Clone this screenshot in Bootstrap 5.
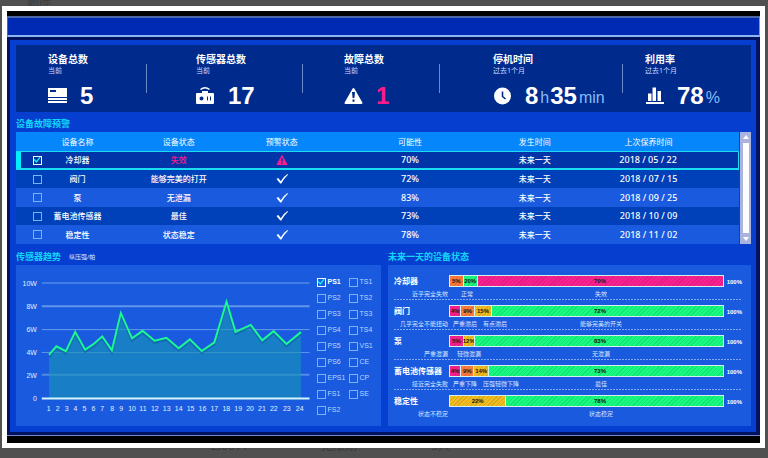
<!DOCTYPE html>
<html lang="zh-CN">
<head>
<meta charset="utf-8">
<meta name="viewport" content="width=device-width, initial-scale=1">
<title>设备监控</title>
<link href="https://cdn.jsdelivr.net/npm/bootstrap@5.3.0/dist/css/bootstrap.min.css" rel="stylesheet">
<style>
body{background:#505050;font-family:"Noto Sans","Noto Sans CJK SC",sans-serif;font-size:8px;line-height:12px;color:#fff;min-height:100vh;overflow:hidden}
.backdrop-text{position:absolute;left:0;right:0;color:#3a3a3a;font-size:12px;line-height:14px;white-space:nowrap}
.backdrop-top{top:-6px;padding-left:27px}
.backdrop-bottom{top:439px;padding-left:211px}
.backdrop-bottom span{display:inline-block;width:110px}
.frame{position:relative;margin:6px 3px 10px 2px;border:5px solid #fff;background:#000;padding:5px 0 7px}
.top-strip{height:21px;background:#0029b4;border:solid;border-width:2px 1px;border-color:#4c68a8 #6b9af0 #8ab8ee #3d62c8}
.board{border:3px solid #001260;border-right-width:4px;background:#063fd0;padding:5px 5px 6px 6px}
.board-end{height:1px;background:#7088c8}
.stats{display:grid;grid-template-columns:130fr 156fr 137fr 183fr 129fr;background:#002a8c;height:67px}
.stat{position:relative;padding:8px 0 0 50px}
.stat:first-child{padding-left:32px}
.stat:nth-child(3){padding-left:42px}
.stat:nth-child(4){padding-left:54px}
.stat:last-child{padding-left:23px}
.stat+.stat::before{content:"";position:absolute;left:0;top:19px;height:29px;border-left:1px solid #6a8ac8}
.stat h2{font-size:10px;line-height:12px;font-weight:700;margin:0}
.stat p{font-size:7px;line-height:12px;margin:0;color:#c9dcff}
.stat .figure-line{height:26px;margin-top:6px;white-space:nowrap}
.stat svg{width:20px;height:20px;margin-right:12px;flex:none}
.stat strong{font:700 24px/24px "Liberation Sans",sans-serif}
.stat .unit{font:16px/24px "Liberation Sans",sans-serif;color:#86bdf8;margin:3px 1px 0 2px}
.hot{color:#f91c8a}
.section-name{font-size:9px;height:20px;line-height:24px;font-weight:700;color:#12d6f8;margin:0}
.section-note{font-size:6px;line-height:24px;color:#dbe8ff}
.alerts{table-layout:fixed;width:100%;margin:0;text-align:center;border-collapse:separate;border-spacing:0}
.alerts th{height:19px;padding:0;background:#0586fb;font-weight:400;font-size:8px}
.alerts td{height:19px;padding:0;background:#0040b8;line-height:12px;font-weight:500}
.alerts tr:nth-child(even) td{height:18px}
.alerts tr:nth-child(odd) td{background:#195adf}
.alerts tr.chosen td{background:#0034a8;border:solid #1cdcf0;border-width:1px 0 2px}
.alerts tr.chosen td:last-child{border-right-width:1px}
.alerts tr.chosen td:first-child{box-shadow:inset 5px 0 #00f0ff}
.alerts td:first-child{padding-left:6px}
.alerts svg{width:12px;height:12px;display:block;margin:auto}
.num{font-size:9px}
.c1{width:5%}.c2{width:7%}.c3{width:21%}.c4{width:7.5%}.c5{width:28%}.c6{width:6.5%}.c7{width:25%}
.tick{appearance:none;width:9px;height:9px;margin:0;border:1px solid #78b4f4;background:transparent;display:block;flex:none}
.alerts .tick{margin:auto}
.tick:checked{border-color:#eefcff}
.tick:checked::after{content:"";display:block;width:7px;height:7px;background:#14f0e0;clip-path:polygon(0 45%,16% 34%,40% 62%,86% 4%,100% 16%,42% 92%)}
.scroller{width:11px;background:#aab2e0;margin-left:1px;padding:3px 2px}
.scroller i{border:3px solid transparent;border-top:0;border-bottom:4px solid #fff}
.scroller i:last-child{transform:rotate(180deg)}
.scroller b{width:6px;background:#fff;flex:1;margin:4px 0}
.panels{display:grid;grid-template-columns:minmax(0,365fr) minmax(0,363fr);column-gap:7px;margin-top:1px}
.panel{background:#195adf;height:161px}
.plot{flex:300 1 0;min-width:0}
.plot text{font:7px "Liberation Sans",sans-serif;fill:#e4f0ff}
.sensors{flex:65 1 0;display:grid;grid-template-columns:32px 30px;grid-template-rows:repeat(9,16px);grid-auto-flow:column;padding:9px 0 0 3px}
.sensors label{display:flex;align-items:center;gap:2px;font:7px/16px "Liberation Sans",sans-serif;color:#b8d8ff;white-space:nowrap}
.sensors label.picked{color:#fff;font-weight:700}
.states{padding:5px 9px 0 6px}
.state{display:grid;grid-template-columns:55px minmax(0,1fr) 18px;grid-template-rows:18px 12px;height:30px}
.state:not(:last-child){background:repeating-linear-gradient(90deg,#7fa8f0 0 2px,transparent 2px 3px) bottom/100% 1px no-repeat}
.state h3{font-size:8px;line-height:12px;font-weight:700;margin:5px 0 0;white-space:nowrap}
.state .total{font:700 6px/12px "Liberation Sans",sans-serif;margin-top:6px;text-align:right}
.meter{height:12px;margin-top:5px;border:1px solid #d5f2ee;border-radius:0;overflow:visible;background:none}
.seg{flex:none;font:700 6px/10px "Liberation Sans",sans-serif;color:#14200c;white-space:nowrap;border-left:1px solid #d5f2ee;background-image:repeating-linear-gradient(135deg,rgba(0,0,0,.1) 0 1px,transparent 1px 3px)}
.seg:first-child{border-left:0}
.seg span{display:flex;justify-content:center;margin:0 -4px}
.rest{flex:1 1 0;min-width:0;display:flex;justify-content:flex-end}
.rest span{flex:none;width:246px;margin:0}
.pink{background-color:#f92090}.orange{background-color:#ff7a3c}.gold{background-color:#f0bc20}.green{background-color:#18fa80}
.note{font-size:6px;line-height:12px;color:#dbe8ff;white-space:nowrap}
.note-first{text-align:right;padding-right:1px}
.notes{display:grid}
.notes>*{grid-area:1/1}
.notes .main-note{justify-self:end;width:246px;text-align:center}
.notes .side{display:flex;gap:6px;padding-left:4px}
</style>
</head>
<body>
<div class="backdrop-text backdrop-top">删除</div>
<div class="backdrop-text backdrop-bottom"><span>2.00TT</span><span>无限期</span><span>3天</span></div>
<div class="frame">
<header class="top-strip"></header>
<main class="board">
<section class="stats">
<div class="stat"><h2>设备总数</h2><p>当前</p><div class="figure-line d-flex align-items-center">
<svg viewBox="0 0 20 20" fill="#fff"><path fill-rule="evenodd" d="M0 2h19v9H0zM2 4v2h6V4z"/><path d="M0 12h19v2H0zM0 15h19v2H0z"/></svg><strong>5</strong></div></div>
<div class="stat"><h2>传感器总数</h2><p>当前</p><div class="figure-line d-flex align-items-center">
<svg viewBox="0 0 20 20"><path d="M4.500 3.500Q9 0 13.500 3.500" fill="none" stroke="#fff" stroke-width="1.500"/><path fill="#fff" fill-rule="evenodd" d="M1 7h5V5h6v2h5q1 0 1 1v9q0 1-1 1H1q-1 0-1-1V8q0-1 1-1zM7.500 12.500a2 2 0 1 0-4 0a2 2 0 1 0 4 0M11 10.500v4h1v-4zM14 10.500v4h1v-4z"/></svg><strong>17</strong></div></div>
<div class="stat"><h2>故障总数</h2><p>当前</p><div class="figure-line d-flex align-items-center">
<svg viewBox="0 0 20 20"><path d="M9.500 3L17.500 17H1.500z" fill="#fff" stroke="#fff" stroke-width="2" stroke-linejoin="round"/><path d="M8 6h3l-.6 6H8.600zM8.500 13.500h2v2.200h-2z" fill="#002a8c"/></svg><strong class="hot">1</strong></div></div>
<div class="stat"><h2>停机时间</h2><p>过去1个月</p><div class="figure-line d-flex align-items-center">
<svg viewBox="0 0 20 20"><circle cx="9.500" cy="10" r="8.500" fill="#fff"/><path d="M9.500 5.500v5l3 2.500" fill="none" stroke="#002a8c" stroke-width="1.600"/></svg><strong>8</strong><span class="unit">h</span><strong>35</strong><span class="unit">min</span></div></div>
<div class="stat"><h2>利用率</h2><p>过去1个月</p><div class="figure-line d-flex align-items-center">
<svg viewBox="0 0 20 20" fill="#fff"><path d="M1 16h18v2H1zM3 7.500h3.500V15H3zM7.500 1.500H11V15H7.500zM12.500 5H16v10h-3.500z"/></svg><strong>78</strong><span class="unit">%</span></div></div>
</section>
<h2 class="section-name">设备故障预警</h2>
<section class="d-flex">
<table class="alerts">
<colgroup><col class="c1"><col class="c2"><col class="c3"><col class="c4"><col class="c5"><col class="c6"><col class="c7"></colgroup>
<thead><tr><th></th><th>设备名称</th><th>设备状态</th><th>预警状态</th><th>可能性</th><th>发生时间</th><th>上次保养时间</th></tr></thead>
<tbody>
<tr class="chosen"><td><input class="tick" type="checkbox" checked aria-label="冷却器"></td><td>冷却器</td><td class="hot">失效</td><td><svg viewBox="0 0 12 12"><path d="M6 1.500L11 10.500H1z" fill="#f91c8a" stroke="#f91c8a" stroke-linejoin="round"/><path d="M5.300 4h1.400v3.500H5.300zM5.300 8.500h1.400v1.300H5.300z" fill="#0034a8"/></svg></td><td class="num">70%</td><td>未来一天</td><td class="num">2018 / 05 / 22</td></tr>
<tr><td><input class="tick" type="checkbox" aria-label="阀门"></td><td>阀门</td><td>能够完美的打开</td><td><svg viewBox="0 0 12 12"><path d="M.5 6L2.300 5 4.800 8.200Q7.500 3.500 11.500 1L12 1.800Q8.500 5 5.300 10.500H4.300Q2.500 8.500.5 6z" fill="#fff"/></svg></td><td class="num">72%</td><td>未来一天</td><td class="num">2018 / 07 / 15</td></tr>
<tr><td><input class="tick" type="checkbox" aria-label="泵"></td><td>泵</td><td>无泄漏</td><td><svg viewBox="0 0 12 12"><path d="M.5 6L2.300 5 4.800 8.200Q7.500 3.500 11.500 1L12 1.800Q8.500 5 5.300 10.500H4.300Q2.500 8.500.5 6z" fill="#fff"/></svg></td><td class="num">83%</td><td>未来一天</td><td class="num">2018 / 09 / 25</td></tr>
<tr><td><input class="tick" type="checkbox" aria-label="蓄电池传感器"></td><td>蓄电池传感器</td><td>最佳</td><td><svg viewBox="0 0 12 12"><path d="M.5 6L2.300 5 4.800 8.200Q7.500 3.500 11.500 1L12 1.800Q8.500 5 5.300 10.500H4.300Q2.500 8.500.5 6z" fill="#fff"/></svg></td><td class="num">73%</td><td>未来一天</td><td class="num">2018 / 10 / 09</td></tr>
<tr><td><input class="tick" type="checkbox" aria-label="稳定性"></td><td>稳定性</td><td>状态稳定</td><td><svg viewBox="0 0 12 12"><path d="M.5 6L2.300 5 4.800 8.200Q7.500 3.500 11.500 1L12 1.800Q8.500 5 5.300 10.500H4.300Q2.500 8.500.5 6z" fill="#fff"/></svg></td><td class="num">78%</td><td>未来一天</td><td class="num">2018 / 11 / 02</td></tr>
</tbody></table>
<div class="scroller d-flex flex-column align-items-center flex-shrink-0"><i></i><b></b><i></i></div>
</section>
<div class="panels">
<section>
<div class="d-flex align-items-start"><h2 class="section-name">传感器趋势</h2><span class="section-note ms-2 section-name fw-normal">纵压强/帕</span></div>
<div class="panel d-flex">
<svg class="plot" viewBox="0 0 300 161">
<g stroke="#a8d4f4"><path d="M26 17.500H296" opacity=".6"/><path d="M26 41H296" stroke-width="2" opacity=".5"/><path d="M26 64.500H296" opacity=".55"/><path d="M26 87.500H296" opacity=".5"/><path d="M26 110H296" stroke-width="2" opacity=".4"/></g>
<path d="M33.300 134V90L40.700 81.300 50.300 86.300 59.700 66.700 69.700 84.700 78.300 79 87 71.300 96.700 85.300 105.700 47.700 117 73.300 127.700 65.700 139.700 75.700 151.700 72.700 164 83.300 175.300 74.300 187.300 86 200 77.300 212.300 36.300 221.300 66.700 236.700 59.700 248.300 75.300 259.700 66 272.700 79 287.300 67V134z" fill="#1896b4" opacity=".6"/>
<path d="M33.300 92L40.700 83.300 50.300 88.300 59.700 68.700 69.700 86.700 78.300 81 87 73.300 96.700 87.300 105.700 49.700 117 75.300 127.700 67.700 139.700 77.700 151.700 74.700 164 85.300 175.300 76.300 187.300 88 200 79.300 212.300 38.300 221.300 68.700 236.700 61.700 248.300 77.300 259.700 68 272.700 81 287.300 69" fill="none" stroke="#0c5c9c" stroke-width="2.500" opacity=".5"/>
<path d="M33.300 90L40.700 81.300 50.300 86.300 59.700 66.700 69.700 84.700 78.300 79 87 71.300 96.700 85.300 105.700 47.700 117 73.300 127.700 65.700 139.700 75.700 151.700 72.700 164 83.300 175.300 74.300 187.300 86 200 77.300 212.300 36.300 221.300 66.700 236.700 59.700 248.300 75.300 259.700 66 272.700 79 287.300 67" fill="none" stroke="#1cf894" stroke-width="2"/>
<path d="M26 134H296" stroke="#d4f6fa" stroke-width="2"/>
<g text-anchor="end"><text x="21" y="21">10W</text><text x="21" y="44">8W</text><text x="21" y="67">6W</text><text x="21" y="90">4W</text><text x="21" y="113">2W</text><text x="21" y="136">0</text></g>
<g text-anchor="middle"><text x="33" y="147">1</text><text x="42" y="147">2</text><text x="51" y="147">3</text><text x="60" y="147">4</text><text x="69" y="147">5</text><text x="78" y="147">6</text><text x="87" y="147">7</text><text x="97" y="147">8</text><text x="106" y="147">9</text><text x="117" y="147">10</text><text x="128" y="147">11</text><text x="140" y="147">12</text><text x="152" y="147">13</text><text x="164" y="147">14</text><text x="176" y="147">15</text><text x="188" y="147">16</text><text x="200" y="147">17</text><text x="212" y="147">18</text><text x="224" y="147">19</text><text x="236" y="147">20</text><text x="248" y="147">21</text><text x="260" y="147">22</text><text x="273" y="147">23</text><text x="286" y="147">24</text></g>
</svg>
<div class="sensors">
<label class="picked"><input class="tick" type="checkbox" checked>PS1</label><label><input class="tick" type="checkbox">PS2</label><label><input class="tick" type="checkbox">PS3</label><label><input class="tick" type="checkbox">PS4</label><label><input class="tick" type="checkbox">PS5</label><label><input class="tick" type="checkbox">PS6</label><label><input class="tick" type="checkbox">EPS1</label><label><input class="tick" type="checkbox">FS1</label><label><input class="tick" type="checkbox">FS2</label>
<label><input class="tick" type="checkbox">TS1</label><label><input class="tick" type="checkbox">TS2</label><label><input class="tick" type="checkbox">TS3</label><label><input class="tick" type="checkbox">TS4</label><label><input class="tick" type="checkbox">VS1</label><label><input class="tick" type="checkbox">CE</label><label><input class="tick" type="checkbox">CP</label><label><input class="tick" type="checkbox">SE</label>
</div>
</div>
</section>
<section>
<h2 class="section-name">未来一天的设备状态</h2>
<div class="panel states">
<div class="state"><h3>冷却器</h3><div class="progress meter"><div class="seg orange" style="width:4.6%"><span>5%</span></div><div class="seg green" style="width:5.2%"><span>20%</span></div><div class="seg rest pink"><span>70%</span></div></div><div class="total">100%</div><div class="note note-first">近乎完全失效</div><div class="note notes"><div class="side"><span class="ms-2">正常</span></div><div class="main-note">失效</div></div></div>
<div class="state"><h3>阀门</h3><div class="progress meter"><div class="seg pink" style="width:3.7%"><span>4%</span></div><div class="seg orange" style="width:5.1%"><span>9%</span></div><div class="seg gold" style="width:6.2%"><span>15%</span></div><div class="seg rest green"><span>72%</span></div></div><div class="total">100%</div><div class="note note-first">几乎完全不能扭动</div><div class="note notes"><div class="side"><span>严重滞后</span><span>有点滞后</span></div><div class="main-note">能够完美的开关</div></div></div>
<div class="state"><h3>泵</h3><div class="progress meter"><div class="seg pink" style="width:4.6%"><span>5%</span></div><div class="seg gold" style="width:4.2%"><span>12%</span></div><div class="seg rest green"><span>83%</span></div></div><div class="total">100%</div><div class="note note-first">严重泄漏</div><div class="note notes"><div class="side"><span class="ms-1">轻微泄漏</span></div><div class="main-note">无泄漏</div></div></div>
<div class="state"><h3>蓄电池传感器</h3><div class="progress meter"><div class="seg pink" style="width:3.7%"><span>4%</span></div><div class="seg orange" style="width:4.9%"><span>9%</span></div><div class="seg gold" style="width:5.3%"><span>14%</span></div><div class="seg rest green"><span>73%</span></div></div><div class="total">100%</div><div class="note note-first">接近完全失败</div><div class="note notes"><div class="side"><span>严重下降</span><span>压强轻微下降</span></div><div class="main-note">最佳</div></div></div>
<div class="state"><h3>稳定性</h3><div class="progress meter"><div class="seg gold" style="width:20.3%"><span>22%</span></div><div class="seg rest green"><span>78%</span></div></div><div class="total">100%</div><div class="note note-first">状态不稳定</div><div class="note notes"><div class="side"></div><div class="main-note">状态稳定</div></div></div>
</div>
</section>
</div>
</main>
<div class="board-end"></div>
</div>
<script src="https://cdn.jsdelivr.net/npm/bootstrap@5.3.0/dist/js/bootstrap.bundle.min.js"></script>
</body>
</html>
